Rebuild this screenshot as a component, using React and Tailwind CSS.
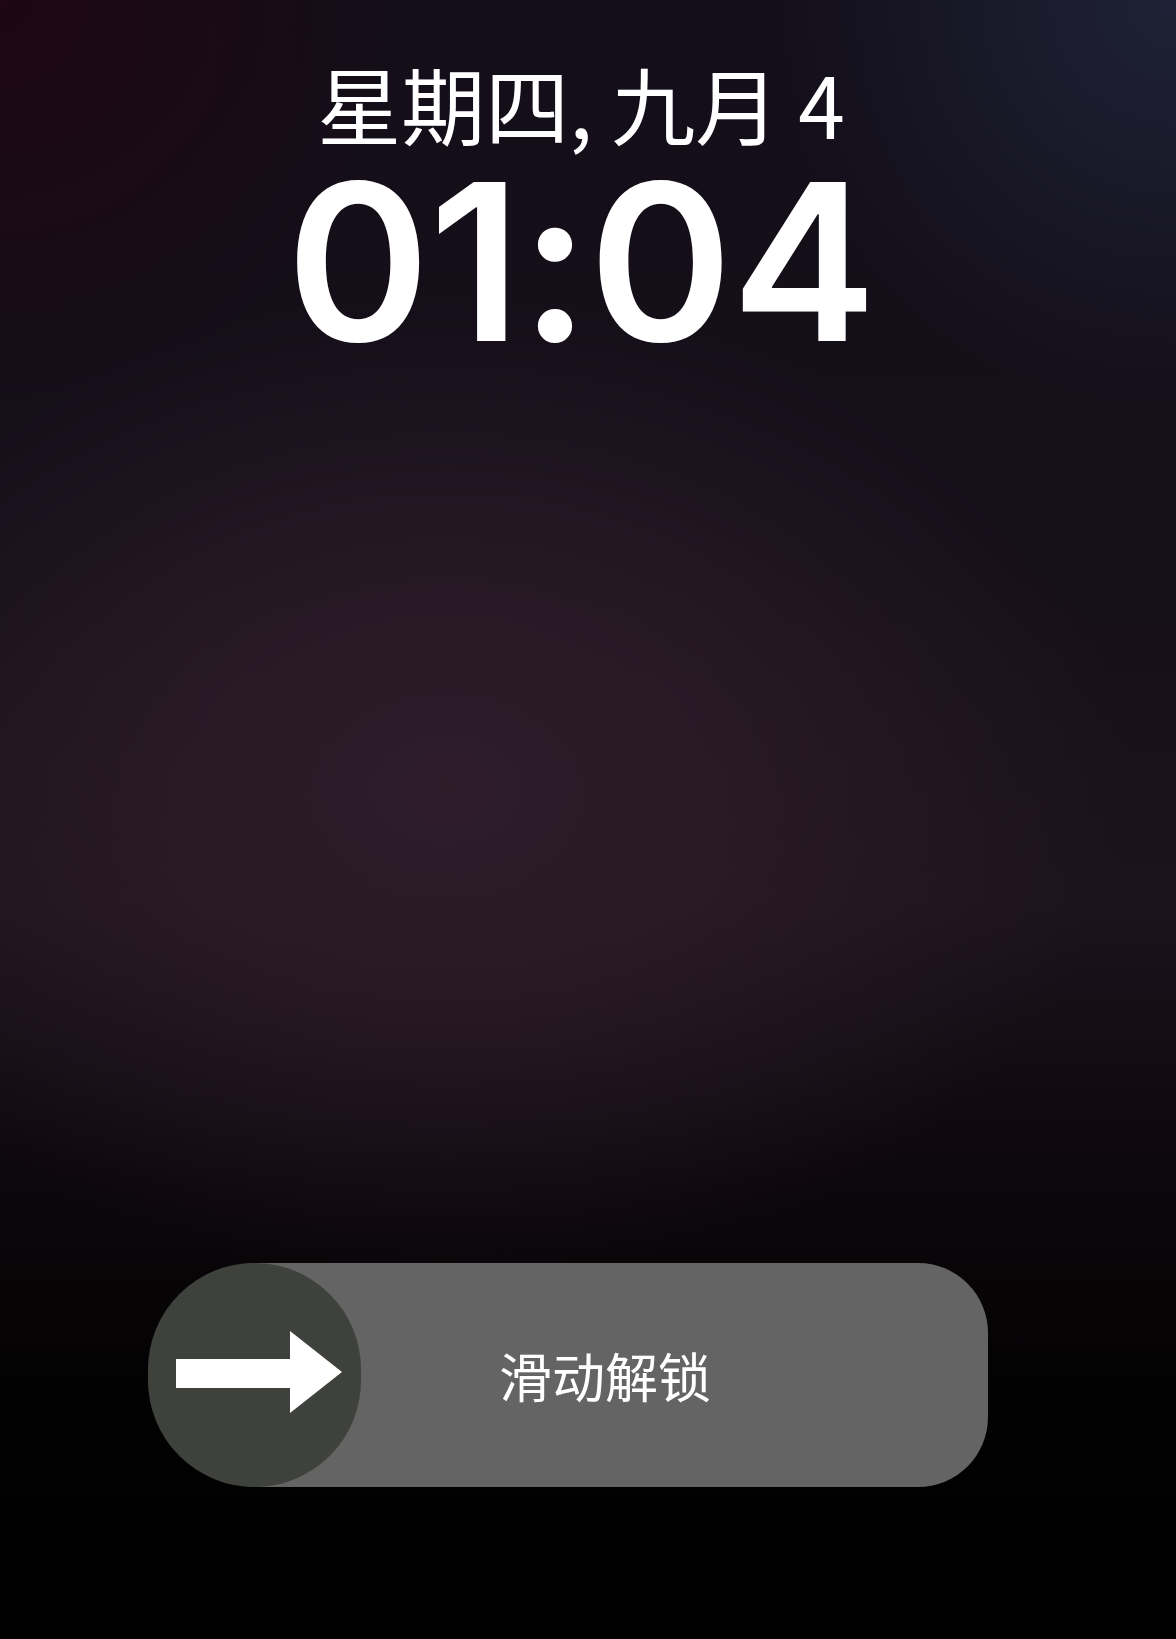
export default function App() {
  return (
    <div className="relative h-[1639px] w-full overflow-hidden bg-[radial-gradient(ellipse_58%_30%_at_38%_48%,#2e1c2b_0%,rgba(44,28,42,0.7)_45%,rgba(30,20,30,0)_100%),radial-gradient(ellipse_35%_25%_at_0%_0%,#1e0614_0%,rgba(30,6,20,0)_100%),radial-gradient(ellipse_35%_25%_at_100%_0%,#1e2236_0%,rgba(30,34,54,0)_100%),linear-gradient(to_bottom,#130e19_0%,#150f19_35%,#1c131c_55%,#0c070b_72%,#030203_85%,#000000_100%)]">
      <div className="flex flex-col items-center pr-[14px] pt-[61px] text-white">
        <div className="font-['Noto_Sans_CJK_SC',sans-serif] text-[84px] leading-none">
          星期四, 九月 4
        </div>
        <div className="mt-[8px] font-['Inter',sans-serif] text-[218px] font-semibold leading-none tracking-[-1px]">
          01:04
        </div>
      </div>

      <div className="ml-[148px] mt-[892px] flex h-[224px] w-[840px] items-center rounded-[112px_70px_70px_112px] bg-[#646464]">
        <div className="h-[224px] w-[213px] shrink-0 rounded-full bg-[#3e413c]">
          <svg viewBox="0 0 213 224" className="h-full w-full">
            <polygon
              points="28,96 142,96 142,68 194,109 142,150 142,125 28,125"
              fill="#ffffff"
            />
          </svg>
        </div>
        <div className="flex-1 pl-[138px] font-['Noto_Sans_CJK_SC',sans-serif] text-[53px] leading-none text-white">
          滑动解锁
        </div>
      </div>
    </div>
  );
}
